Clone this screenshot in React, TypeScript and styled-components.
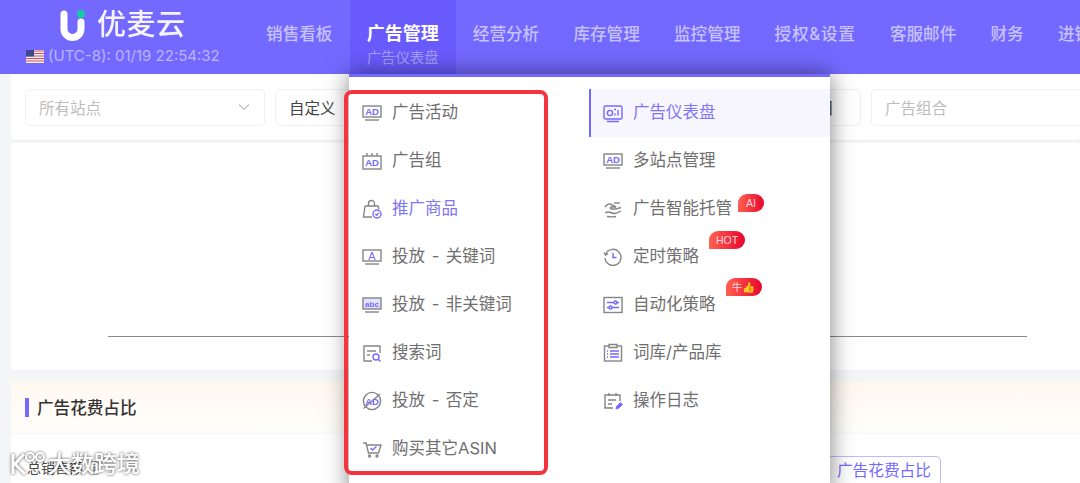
import React from 'react';
import styled, { createGlobalStyle } from 'styled-components';

const GlobalStyle = createGlobalStyle`
  html, body {
    margin: 0;
    padding: 0;
    background: #f4f5f7;
    font-family: Inter, "Noto Sans CJK SC", sans-serif;
  }
`;

const GRAY = '#858585';
const PURPLE = '#7469ff';

const Page = styled.div`
  position: relative;
  width: 1080px;
  height: 483px;
  overflow: hidden;
  background: #f4f5f7;
`;

// ===== Header =====
const Header = styled.header`
  display: flex;
  height: 74px;
  background: ${PURPLE};
  overflow: hidden;
`;

const BrandBlock = styled.div`
  flex: 0 0 249px;
  box-sizing: border-box;
  padding: 7px 0 0 26px;
  display: flex;
  flex-direction: column;
`;

const BrandRow = styled.div`
  display: flex;
  align-items: center;
  gap: 11px;
  margin-left: 34px;
  height: 36px;
`;

const BrandName = styled.span`
  color: #fff;
  opacity: 0.92;
  font-size: 29px;
  line-height: 36px;
  font-weight: 500;
  letter-spacing: 0.5px;
`;

const ClockRow = styled.div`
  display: flex;
  align-items: center;
  gap: 4px;
  margin-top: 3px;
  color: rgba(255, 255, 255, 0.5);
  font-size: 15px;
  line-height: 20px;
  white-space: nowrap;
`;

const Nav = styled.nav`
  display: flex;
  flex: none;
`;

const NavItem = styled.div<{ $active?: boolean; $spaced?: boolean }>`
  padding: 21px 17.1px 0;
  flex: none;
  white-space: nowrap;
  font-size: ${({ $active }) => ($active ? '18px' : '16.6px')};
  line-height: 26px;
  font-weight: ${({ $active }) => ($active ? 700 : 500)};
  letter-spacing: ${({ $spaced }) => ($spaced ? '0.8px' : '0')};
  color: ${({ $active }) => ($active ? '#fff' : 'rgba(255, 255, 255, 0.6)')};
  background: ${({ $active }) => ($active ? '#695bfd' : 'transparent')};
`;

const NavSub = styled.div`
  font-size: 14.4px;
  line-height: 22px;
  font-weight: 400;
  color: rgba(255, 255, 255, 0.42);
`;

// ===== Page body behind the dropdown =====
const Body = styled.main`
  padding-left: 11px;
`;

const FilterCard = styled.section`
  display: flex;
  gap: 10px;
  height: 67px;
  box-sizing: border-box;
  padding: 15px 0 0 14px;
  background: #fff;
  border-bottom: 1px solid #eeeff1;
  border-radius: 0 0 4px 4px;
`;

const Select = styled.div<{ $width: number; $filled?: boolean }>`
  flex: 0 0 ${({ $width }) => $width}px;
  box-sizing: border-box;
  height: 37px;
  padding: 0 13px 2px;
  display: flex;
  align-items: center;
  justify-content: space-between;
  border: 1px solid #f0f0f2;
  border-radius: 5px;
  font-size: 15.5px;
  color: ${({ $filled }) => ($filled ? '#444' : '#bdbdbd')};
`;

const DateEnd = styled.span`
  color: #444;
  margin-right: 13px;
`;

const ChartCard = styled.section`
  height: 227px;
  margin-top: 2px;
  box-sizing: border-box;
  padding: 193px 53px 0 97px;
  background: #fff;
`;

const Axis = styled.div`
  height: 1px;
  background: #8a8a8a;
`;

const SpendCard = styled.section`
  margin-top: 11px;
  background: #fff;
  height: 102px;
`;

const SpendHeader = styled.div`
  height: 53px;
  box-sizing: border-box;
  padding-left: 14px;
  display: flex;
  align-items: center;
  gap: 8px;
  background: linear-gradient(180deg, #fff8f0 0%, #fffdfb 100%);
  border-bottom: 1px solid #f6f6f6;
`;

const TitleMark = styled.i`
  width: 4px;
  height: 19px;
  background: ${PURPLE};
`;

const SpendTitle = styled.h3`
  margin: 2px 0 0;
  font-size: 16.6px;
  line-height: 24px;
  font-weight: 500;
  color: #333;
`;

const SpendRow = styled.div`
  display: flex;
  align-items: flex-start;
  justify-content: space-between;
  padding: 22px 139px 0 16px;
`;

const MetricName = styled.span`
  font-size: 14px;
  line-height: 24px;
  color: #444;
`;

const TabButton = styled.span`
  box-sizing: border-box;
  height: 30px;
  padding: 0 9px;
  border: 1px solid #bdb8ff;
  border-radius: 5px;
  font-size: 15.7px;
  line-height: 28px;
  color: ${PURPLE};
`;

// ===== Dropdown =====
const Menu = styled.div`
  position: absolute;
  left: 349px;
  top: 74px;
  width: 481px;
  height: 420px;
  box-sizing: border-box;
  padding-top: 12px;
  display: grid;
  grid-template-columns: 240px 241px;
  align-content: start;
  background: #fff;
  border-top: 3px solid ${PURPLE};
  box-shadow: 0 0 22px rgba(0, 0, 0, 0.5);
`;

const MenuColumn = styled.ul`
  list-style: none;
  margin: 0;
  padding: 0;
`;

const MenuRow = styled.li<{ $current?: boolean; $inset: number; $tone?: 'accent' }>`
  height: 48px;
  box-sizing: border-box;
  display: flex;
  align-items: center;
  gap: 10px;
  padding-left: ${({ $inset }) => $inset}px;
  border-left: ${({ $current }) => ($current ? `2px solid ${PURPLE}` : '0')};
  background: ${({ $current }) => ($current ? '#f7f6ff' : 'transparent')};
  font-size: 16.5px;
  color: ${({ $current, $tone }) => ($current || $tone ? '#7f75f5' : '#6f6f6f')};
  white-space: nowrap;
`;

const Label = styled.span`
  position: relative;
  top: -1px;
  line-height: 24px;
  word-spacing: 2px;
`;

const Badge = styled.b<{ $gap: number; $rise: number; $wide: number }>`
  position: absolute;
  left: calc(100% + ${({ $gap }) => $gap}px);
  top: ${({ $rise }) => $rise}px;
  width: ${({ $wide }) => $wide}px;
  height: 18px;
  display: flex;
  align-items: center;
  justify-content: center;
  border-radius: 9px 9px 9px 0;
  background: linear-gradient(90deg, #ff6150 0%, #e8062f 100%);
  font-family: "Liberation Sans", "Noto Sans CJK SC", sans-serif;
  font-size: 10.5px;
  font-weight: 400;
  color: #ffd9d9;
`;

const Annotation = styled.div`
  position: absolute;
  left: 344px;
  top: 90px;
  width: 204px;
  height: 385px;
  box-sizing: border-box;
  border: 4px solid #f5333f;
  border-radius: 8px;
`;

// ===== Overlays =====
const Watermarks = styled.div`
  position: absolute;
  inset: 0;
  display: grid;
  grid-template-columns: repeat(6, 180px);
  grid-auto-rows: 60px;
  pointer-events: none;
`;

const Mark = styled.span<{ $shift: boolean }>`
  transform: translateX(${({ $shift }) => ($shift ? 90 : 0)}px) rotate(-28deg);
  align-self: center;
  justify-self: center;
  font-family: "Liberation Sans", sans-serif;
  font-size: 18px;
  color: rgba(0, 0, 0, 0.025);
`;

const SourceTag = styled.div`
  position: absolute;
  left: 10px;
  top: 449px;
  display: flex;
  align-items: center;
  color: #fff;
  font-size: 23px;
  line-height: 30px;
  font-weight: 500;
  filter: drop-shadow(0 0 1.5px rgba(0, 0, 0, 0.7));
`;

// ===== Drawings =====
const Ico: React.FC<{ children: React.ReactNode }> = ({ children }) => (
  <svg width="20" height="20" viewBox="0 0 20 20" fill="none" stroke={GRAY} strokeWidth="1.4" style={{ flex: 'none' }}>
    {children}
  </svg>
);

const AdText = ({ y = 12 }: { y?: number }) => (
  <text x="10" y={y} textAnchor="middle" fontFamily="Liberation Sans" fontWeight="700" fontSize="9.5" fill={PURPLE} stroke="none">
    AD
  </text>
);

const icons: Record<string, React.ReactNode> = {
  adScreen: (
    <Ico>
      <rect x="1" y="3" width="18" height="11" />
      <path d="M3 17h14" />
      <AdText />
    </Ico>
  ),
  adGroup: (
    <Ico>
      <rect x="1" y="5" width="18" height="13" />
      <path d="M5 2v3M10 2v3M15 2v3" />
      <AdText y={15} />
    </Ico>
  ),
  bag: (
    <Ico>
      <path d="M3 7h13l1 3M3 7L1.500 18H10M6.500 7V4.500a3 3 0 0 1 6 0V7" />
      <circle cx="15" cy="15" r="4" stroke={PURPLE} />
      <path d="M13.200 15l1.400 1.300 2.200-2.400" stroke={PURPLE} />
    </Ico>
  ),
  keyword: (
    <Ico>
      <rect x="1" y="3" width="18" height="11" />
      <path d="M3 17h14" />
      <text x="10" y="12.500" textAnchor="middle" fontFamily="Liberation Sans" fontSize="11" fill={PURPLE} stroke="none">A</text>
    </Ico>
  ),
  abc: (
    <Ico>
      <rect x="1" y="3" width="18" height="11" fill="#e4e2ff" />
      <path d="M3 17h14" />
      <text x="10" y="11.500" textAnchor="middle" fontFamily="Liberation Sans" fontWeight="700" fontSize="8" fill={PURPLE} stroke="none">abc</text>
    </Ico>
  ),
  search: (
    <Ico>
      <path d="M10 18H2V3h16v7" />
      <path d="M5 8h9M5 12h3" />
      <circle cx="14" cy="14" r="3" stroke={PURPLE} />
      <path d="M16.200 16.200L18.500 18.500" stroke={PURPLE} />
    </Ico>
  ),
  negative: (
    <Ico>
      <circle cx="10" cy="10" r="8.600" />
      <path d="M1.500 17.500L18 3" />
      <AdText y={13.500} />
    </Ico>
  ),
  cart: (
    <Ico>
      <path d="M1 4h3l2.500 10h10L19 6H5" />
      <circle cx="7.500" cy="17" r="1" />
      <circle cx="15" cy="17" r="1" />
      <path d="M8.500 9l2 2 4-3.500" stroke={PURPLE} />
    </Ico>
  ),
  dashboard: (
    <Ico>
      <g stroke={PURPLE}>
        <rect x="1" y="3" width="18" height="13" rx="1.500" />
        <circle cx="7" cy="10" r="2.600" />
        <path d="M12 12.500v-2M15 12.500V7M11 6.500h2M4 18.500h12" />
      </g>
    </Ico>
  ),
  hand: (
    <Ico>
      <path d="M2 8c2-3 5-4 7-2l4 2H8c-1 0-1 1.500 0 2h5l5-1.500" />
      <path d="M2 14c3-2 5-1 7 0s4 1 9-2" />
      <path d="M11 4h6" />
      <path d="M4 17.500c3 .5 6 .5 9 0" />
    </Ico>
  ),
  clock: (
    <Ico>
      <path d="M2.500 7.500A8 8 0 1 1 2 11" />
      <path d="M1 5.500l1.500 2.500 2.500-1.300" />
      <path d="M10 6v4.500h3.500" stroke={PURPLE} />
    </Ico>
  ),
  sliders: (
    <Ico>
      <rect x="1" y="2.500" width="18" height="15" />
      <g stroke={PURPLE}>
        <path d="M4 7.500h12M4 12.500h12" />
        <circle cx="12.500" cy="7.500" r="1.500" fill="#fff" />
        <circle cx="7.500" cy="12.500" r="1.500" fill="#fff" />
      </g>
    </Ico>
  ),
  list: (
    <Ico>
      <rect x="1.500" y="3" width="17" height="15" />
      <path d="M6 1.500h8v3H6z" fill="#fff" />
      <path d="M7 8h9M7 11h9M7 14h9M4 8h1M4 11h1M4 14h1" stroke={PURPLE} />
    </Ico>
  ),
  log: (
    <Ico>
      <path d="M10 17H2V4h15v6" />
      <path d="M6 2v3M13 2v3M5 9h8M5 13h4" />
      <path d="M13 18l.5-2.500 4-4 2 2-4 4z" fill={PURPLE} stroke={PURPLE} strokeWidth=".8" />
    </Ico>
  ),
};

const LogoMark = () => (
  <svg width="26" height="31" viewBox="0 0 26 31" fill="none">
    <path d="M4 4v15a8.500 8.500 0 0 0 17 0v-7" stroke="#fff" strokeWidth="7" strokeLinecap="round" />
    <circle cx="21" cy="4" r="4" fill="#16c9a5" />
  </svg>
);

const UsFlag = () => (
  <svg width="18" height="13" viewBox="0 0 18 13">
    <rect width="18" height="13" fill="#f3f0f3" />
    <path d="M0 1h18M0 3.500h18M0 6h18M0 8.500h18M0 11h18" stroke="#d9525f" strokeWidth="1.200" />
    <rect width="8" height="6.500" fill="#3a4a8c" />
  </svg>
);

const SourceLogo = () => (
  <svg width="38" height="26" viewBox="0 0 38 26" fill="none" stroke="#fff" strokeWidth="3">
    <path d="M3 3v20M14 3L5 13l10 10" />
    <circle cx="20" cy="6" r="4" strokeWidth="2" />
    <circle cx="30" cy="6" r="4" strokeWidth="2" />
  </svg>
);

const navItems = ['销售看板', '广告管理', '经营分析', '库存管理', '监控管理', '授权&设置', '客服邮件', '财务', '进销存'];

const leftMenu = [
  { icon: 'adScreen', label: '广告活动' },
  { icon: 'adGroup', label: '广告组' },
  { icon: 'bag', label: '推广商品', accent: true },
  { icon: 'keyword', label: '投放 - 关键词' },
  { icon: 'abc', label: '投放 - 非关键词' },
  { icon: 'search', label: '搜索词' },
  { icon: 'negative', label: '投放 - 否定' },
  { icon: 'cart', label: '购买其它ASIN' },
];

const rightMenu = [
  { icon: 'dashboard', label: '广告仪表盘', current: true },
  { icon: 'adScreen', label: '多站点管理' },
  { icon: 'hand', label: '广告智能托管', badge: { text: 'AI', gap: 6, rise: -2, wide: 26 } },
  { icon: 'clock', label: '定时策略', badge: { text: 'HOT', gap: 10, rise: -13, wide: 36 } },
  { icon: 'sliders', label: '自动化策略', badge: { text: '牛👍', gap: 10, rise: -14, wide: 36 } },
  { icon: 'list', label: '词库/产品库' },
  { icon: 'log', label: '操作日志' },
];

export default function App() {
  return (
    <Page>
      <GlobalStyle />
      <Header>
        <BrandBlock>
          <BrandRow>
            <LogoMark />
            <BrandName>优麦云</BrandName>
          </BrandRow>
          <ClockRow>
            <UsFlag />
            (UTC-8): 01/19 22:54:32
          </ClockRow>
        </BrandBlock>
        <Nav>
          {navItems.map((item) => (
            <NavItem key={item} $active={item === '广告管理'} $spaced={item.includes('&')}>
              {item}
              {item === '广告管理' && <NavSub>广告仪表盘</NavSub>}
            </NavItem>
          ))}
        </Nav>
      </Header>

      <Body>
        <FilterCard>
          <Select $width={240}>
            所有站点
            <svg width="14" height="14" viewBox="0 0 14 14" fill="none" stroke="#bdbdbd" strokeWidth="1.100">
              <path d="M2 4.500l5 5 5-5" />
            </svg>
          </Select>
          <Select $width={586} $filled>
            自定义
            <DateEnd>日</DateEnd>
          </Select>
          <Select $width={240}>广告组合</Select>
        </FilterCard>
        <ChartCard>
          <Axis />
        </ChartCard>
        <SpendCard>
          <SpendHeader>
            <TitleMark />
            <SpendTitle>广告花费占比</SpendTitle>
          </SpendHeader>
          <SpendRow>
            <MetricName>总销售额 ⓘ</MetricName>
            <TabButton>广告花费占比</TabButton>
          </SpendRow>
        </SpendCard>
      </Body>

      <Menu>
        <MenuColumn>
          {leftMenu.map((row) => (
            <MenuRow key={row.label} $inset={13} $tone={row.accent ? 'accent' : undefined}>
              {icons[row.icon]}
              <Label>{row.label}</Label>
            </MenuRow>
          ))}
        </MenuColumn>
        <MenuColumn>
          {rightMenu.map((row) => (
            <MenuRow key={row.label} $inset={row.current ? 12 : 14} $current={row.current}>
              {icons[row.icon]}
              <Label>
                {row.label}
                {row.badge && (
                  <Badge $gap={row.badge.gap} $rise={row.badge.rise} $wide={row.badge.wide}>
                    {row.badge.text}
                  </Badge>
                )}
              </Label>
            </MenuRow>
          ))}
        </MenuColumn>
      </Menu>

      <Watermarks>
        {Array.from({ length: 48 }, (_, i) => (
          <Mark key={i} $shift={Math.floor(i / 6) % 2 === 1}>10956</Mark>
        ))}
      </Watermarks>

      <Annotation />

      <SourceTag>
        <SourceLogo />
        大数跨境
      </SourceTag>
    </Page>
  );
}
